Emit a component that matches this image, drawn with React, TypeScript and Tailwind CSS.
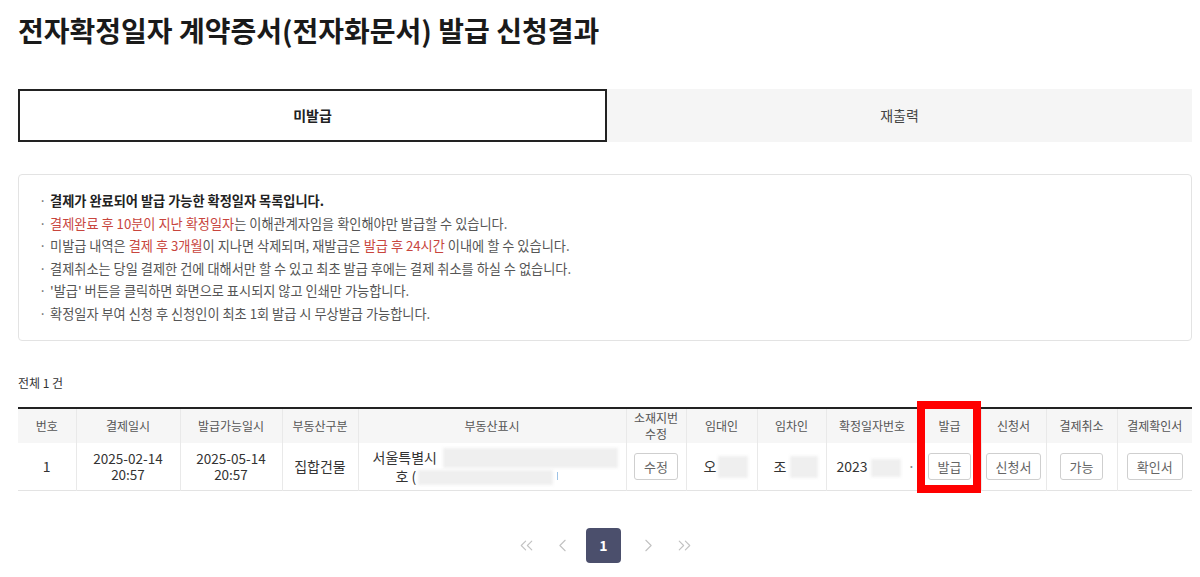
import { ChevronLeft, ChevronRight, ChevronsLeft, ChevronsRight } from 'lucide-react'

const FONT = { fontFamily: '"Noto Sans CJK KR", "Noto Sans", sans-serif' }

const columns = [
  { key: 'no', label: '번호', width: 58 },
  { key: 'paid', label: '결제일시', width: 104 },
  { key: 'avail', label: '발급가능일시', width: 102 },
  { key: 'type', label: '부동산구분', width: 76 },
  { key: 'addr', label: '부동산표시', width: 268 },
  { key: 'edit', label: '소재지번\n수정', width: 60 },
  { key: 'lessor', label: '임대인', width: 71 },
  { key: 'lessee', label: '임차인', width: 69 },
  { key: 'num', label: '확정일자번호', width: 92 },
  { key: 'issue', label: '발급', width: 63 },
  { key: 'form', label: '신청서', width: 65 },
  { key: 'cancel', label: '결제취소', width: 71 },
  { key: 'confirm', label: '결제확인서', width: 75 },
]

function Blur({ w, h = 18 }: { w: number; h?: number }) {
  return <span className="inline-block bg-[#efefef] blur-[1.5px] align-middle" style={{ width: w, height: h }} />
}

function CellButton({ label }: { label: string }) {
  return (
    <button className="h-[27px] px-[9px] border border-[#cfcfcf] rounded-[3px] bg-white text-[13px] text-[#666] leading-none">
      {label}
    </button>
  )
}

function Red({ children }: { children: React.ReactNode }) {
  return <span className="text-[#c8453d]">{children}</span>
}

export default function App() {
  const notes: React.ReactNode[] = [
    <span className="font-bold text-[#222]">결제가 완료되어 발급 가능한 확정일자 목록입니다.</span>,
    <>
      <Red>결제완료 후 10분이 지난 확정일자</Red>는 이해관계자임을 확인해야만 발급할 수 있습니다.
    </>,
    <>
      미발급 내역은 <Red>결제 후 3개월</Red>이 지나면 삭제되며, 재발급은 <Red>발급 후 24시간</Red> 이내에 할 수 있습니다.
    </>,
    <>결제취소는 당일 결제한 건에 대해서만 할 수 있고 최초 발급 후에는 결제 취소를 하실 수 없습니다.</>,
    <>'발급' 버튼을 클릭하면 화면으로 표시되지 않고 인쇄만 가능합니다.</>,
    <>확정일자 부여 신청 후 신청인이 최초 1회 발급 시 무상발급 가능합니다.</>,
  ]

  return (
    <div className="w-[1200px] h-[577px] bg-white overflow-hidden px-[18px] pr-[8px]" style={FONT}>
      <h1 className="pt-[10px] text-[28px] leading-[40px] font-bold text-[#1a1a1a]">
        전자확정일자 계약증서(전자화문서) 발급 신청결과
      </h1>

      <div className="mt-[39px] flex h-[53px]">
        <div className="w-[589px] border-2 border-[#222] bg-white flex items-center justify-center text-[14px] font-bold text-[#222]">
          미발급
        </div>
        <div className="flex-1 bg-[#f5f5f5] flex items-center justify-center text-[14px] text-[#444]">
          재출력
        </div>
      </div>

      <div className="mt-[32px] h-[167px] border border-[#e3e3e3] rounded-[4px] pl-[20px] py-[15px] text-[13.2px] leading-[22.5px] text-[#555]">
        {notes.map((n, i) => (
          <div key={i} className="flex">
            <span className="w-[11px] text-[#666]">·</span>
            <span>{n}</span>
          </div>
        ))}
      </div>

      <div className="mt-[33px] text-[12px] text-[#333] leading-[18px]">전체 1 건</div>

      <div className="relative mt-[15px]">
        <table className="table-fixed border-collapse w-[1174px] border-t-2 border-[#222]" style={FONT}>
          <colgroup>
            {columns.map((c) => (
              <col key={c.key} style={{ width: c.width }} />
            ))}
          </colgroup>
          <thead>
            <tr className="bg-[#f6f6f6] h-[35px]">
              {columns.map((c, i) => (
                <th
                  key={c.key}
                  className={`font-normal text-[12px] leading-[16px] text-[#555] whitespace-pre-line text-center ${i > 0 ? 'border-l border-[#e9e9e9]' : ''}`}
                >
                  {c.label}
                </th>
              ))}
            </tr>
          </thead>
          <tbody>
            <tr className="h-[47px] border-b border-[#e3e3e3] text-[#333]">
              <td className="text-center text-[14px]">1</td>
              <td className="border-l border-[#e9e9e9] text-center text-[13.5px] leading-[16px]">
                <div>2025-02-14</div>
                <div>20:57</div>
              </td>
              <td className="border-l border-[#e9e9e9] text-center text-[13.5px] leading-[16px]">
                <div>2025-05-14</div>
                <div>20:57</div>
              </td>
              <td className="border-l border-[#e9e9e9] text-center text-[14px]">집합건물</td>
              <td className="border-l border-[#e9e9e9] text-[14px] leading-[17px]">
                <div className="flex items-center pl-[14px]">
                  <span>서울특별시</span>
                  <span className="ml-[6px]">
                    <Blur w={175} h={20} />
                  </span>
                </div>
                <div className="flex items-center pl-[37px]">
                  <span>호 (</span>
                  <span className="ml-[2px]">
                    <Blur w={135} h={15} />
                  </span>
                  <span className="ml-[4px] inline-block w-[1px] h-[8px] bg-[#9ec3e6]" />
                </div>
              </td>
              <td className="border-l border-[#e9e9e9] text-center">
                <CellButton label="수정" />
              </td>
              <td className="border-l border-[#e9e9e9] text-[14px]">
                <div className="flex items-center pl-[17px]">
                  <span>오</span>
                  <span className="ml-[2px]">
                    <Blur w={30} h={22} />
                  </span>
                </div>
              </td>
              <td className="border-l border-[#e9e9e9] text-[14px]">
                <div className="flex items-center pl-[16px]">
                  <span>조</span>
                  <span className="ml-[4px]">
                    <Blur w={28} h={22} />
                  </span>
                </div>
              </td>
              <td className="border-l border-[#e9e9e9] text-[14px]">
                <div className="flex items-center pl-[10px]">
                  <span>2023</span>
                  <span className="ml-[3px]">
                    <Blur w={30} h={18} />
                  </span>
                  <span className="ml-[7px] text-[#888]">·</span>
                </div>
              </td>
              <td className="border-l border-[#e9e9e9] text-center">
                <CellButton label="발급" />
              </td>
              <td className="border-l border-[#e9e9e9] text-center">
                <CellButton label="신청서" />
              </td>
              <td className="border-l border-[#e9e9e9] text-center">
                <CellButton label="가능" />
              </td>
              <td className="border-l border-[#e9e9e9] text-center">
                <CellButton label="확인서" />
              </td>
            </tr>
          </tbody>
        </table>
        <div className="absolute left-[899px] top-[-6px] w-[64px] h-[92px] border-[8px] border-[#ff0000] pointer-events-none" />
      </div>

      <div className="mt-[37px] flex items-center justify-center text-[#c2c2c2]">
        <span className="w-[36px] flex justify-center">
          <ChevronsLeft size={21} strokeWidth={1.3} />
        </span>
        <span className="w-[36px] flex justify-center">
          <ChevronLeft size={21} strokeWidth={1.3} />
        </span>
        <span className="ml-[6px] mr-[9px] w-[35px] h-[35px] rounded-[4px] bg-[#4b4f6c] text-white text-[14px] font-bold flex items-center justify-center">
          1
        </span>
        <span className="w-[36px] flex justify-center">
          <ChevronRight size={21} strokeWidth={1.3} />
        </span>
        <span className="w-[36px] flex justify-center">
          <ChevronsRight size={21} strokeWidth={1.3} />
        </span>
      </div>
    </div>
  )
}
